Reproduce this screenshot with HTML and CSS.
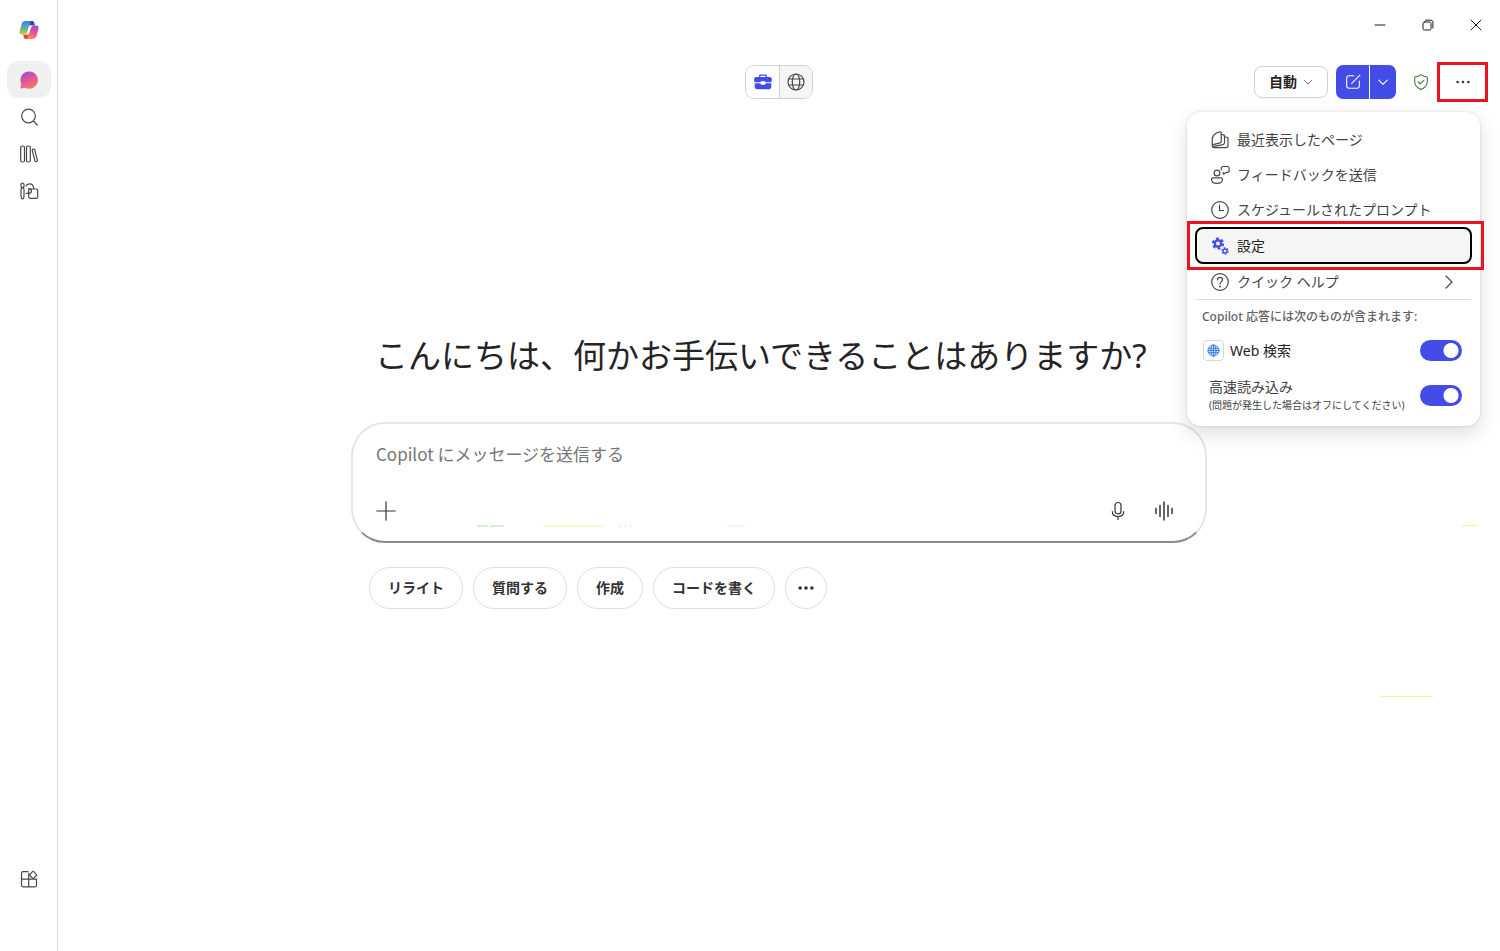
FILE: index.html
```html
<!DOCTYPE html>
<html lang="ja">
<head>
<meta charset="utf-8">
<title>Copilot</title>
<link rel="stylesheet" href="styles.css">
</head>
<body>
<div class="app">
  <nav class="rail" aria-label="ナビゲーション">
    <svg class="logo" viewBox="0 0 20 20" aria-hidden="true">
      <defs>
        <linearGradient id="lgA" x1="0.3" y1="0" x2="0.2" y2="1"><stop offset="0" stop-color="#3f7fe0"/><stop offset=".35" stop-color="#4aa0dc"/><stop offset=".6" stop-color="#6abf6a"/><stop offset="1" stop-color="#e8c23c"/></linearGradient>
        <linearGradient id="lgB" x1="0.8" y1="0" x2="0.3" y2="1"><stop offset="0" stop-color="#a54ee0"/><stop offset=".5" stop-color="#e8508c"/><stop offset="1" stop-color="#f9965a"/></linearGradient>
        <linearGradient id="lgC" x1="0.2" y1="0" x2="0.7" y2="1"><stop offset="0" stop-color="#9b4bd6"/><stop offset=".45" stop-color="#d9569f"/><stop offset="1" stop-color="#ff7a5c"/></linearGradient>
      </defs>
      <path fill="#2448b8" d="M11 1h2.200c1.200 0 1.700.8 2 1.800l.8 2.700h-3.500c-1.400 0-2 .8-2.500 2z"/>
      <path fill="#e8482f" d="M9 19H6.800c-1.200 0-1.700-.8-2-1.800L4 14.500h3.500c1.400 0 2-.8 2.500-2z"/>
      <path fill="url(#lgA)" d="M6.600 1H13c-1.200 0-1.800.9-2.200 2.200L8.400 11.500c-.6 2-1.400 3-3.400 3H2.600C.6 14.500 0 13 .6 11l2-7C3.300 2 4.400 1 6.600 1z"/>
      <path fill="url(#lgB)" d="M13.400 19H7c1.200 0 1.800-.9 2.200-2.200l2.400-8.300c.6-2 1.400-3 3.400-3h2.400c2 0 2.600 1.500 2 3.500l-2 7c-.7 2-1.800 3-4 3z"/>
      <path fill="#fff" d="M10.800 5.500h2.700c-1.200.4-1.700 1.200-2.100 2.600l-1.200 4c-.4 1.400-1 2.200-2.200 2.400H6.200c1.400-.2 2-1.100 2.400-2.500l1.100-3.900c.3-1.100.6-1.900 1.100-2.600z"/>
    </svg>
    <button class="rail-btn active" aria-label="チャット"><svg viewBox="0 0 20 20"><path fill="url(#lgC)" d="M10.200 1.500a8.600 8.600 0 1 1-3.900 16.200L2 18.600c-.4.100-.7-.2-.6-.6l.9-4.100A8.600 8.600 0 0 1 10.200 1.500z"/></svg></button>
    <button class="rail-btn" aria-label="検索"><svg class="ln" viewBox="0 0 20 20"><circle cx="9.500" cy="9" r="6.800"/><path d="M14.400 14l4 4"/></svg></button>
    <button class="rail-btn" aria-label="ライブラリ"><svg class="ln" viewBox="0 0 20 20"><rect x="1.700" y="2" width="3.800" height="16" rx="1.500"/><rect x="7.500" y="2" width="3.800" height="16" rx="1.500"/><path d="M13.300 6.700c-.2-.8.200-1.300.9-1.500.8-.2 1.400.2 1.600.9l2.600 10c.2.800-.2 1.300-.9 1.500-.8.200-1.400-.2-1.600-.9z"/></svg></button>
    <button class="rail-btn" aria-label="作成"><svg class="ln" viewBox="0 0 20 20"><path d="M3.500 2c1.100 0 1.600.9 1.600 2.200 0 1-.5 2-1.100 2.500H3c-.6-.5-1.100-1.500-1.100-2.500C1.900 2.900 2.400 2 3.500 2zM2 8.500c0-1 .5-1.600 1.500-1.600S5 7.500 5 8.500v6c0 1.500-.6 3.300-1.500 3.300S2 16 2 14.500z"/><path d="M7 4.800c.8-1.200 2-1.900 3.500-1.900 2.400 0 4.100 1.700 4.200 4.600M7.200 12.300h2c1.900 0 3.300-1.200 3.300-2.600S11.200 7.500 9.500 7.500"/><rect x="9.700" y="8" width="9" height="9.300" rx="1.600"/></svg></button>
    <button class="rail-btn apps" aria-label="アプリ"><svg class="ln" viewBox="0 0 20 20"><path d="M9 2.700H4C3 2.700 2.500 3.200 2.500 4.200v12.100c0 1 .5 1.500 1.500 1.500h12c1 0 1.500-.5 1.500-1.500v-6.100h-15M9.700 4.500v13.300"/><path d="M13.500 2.700c.4-.4.800-.4 1.200 0l2.600 2.600c.4.400.4.800 0 1.200l-2.600 2.600c-.4.400-.8.400-1.200 0l-2.600-2.600c-.4-.4-.4-.8 0-1.200z"/></svg></button>
  </nav>

  <div class="stage">
    <header>
      <div class="window-bar">
        <button aria-label="最小化"><svg viewBox="0 0 12 12"><path d="M1 6h10"/></svg></button>
        <button aria-label="元に戻す"><svg viewBox="0 0 12 12"><rect x="1" y="3" width="8" height="8" rx="1.500"/><path d="M3.500 1.200H9c1.200 0 1.900.7 1.900 1.900V9"/></svg></button>
        <button aria-label="閉じる"><svg viewBox="0 0 12 12"><path d="M1 1l10 10M11 1L1 11"/></svg></button>
      </div>
      <div class="toolbar">
        <div class="mode">
          <button class="on" aria-label="職場"><svg viewBox="0 0 20 20"><path fill="#444ce7" d="M6 5V4c0-1 .6-1.500 1.500-1.500h5c.9 0 1.500.5 1.500 1.500v1h2.500c1.500 0 2.300.8 2.300 2.200v1.600c0 1-.6 1.500-1.500 1.500h-4.800c0-.8-.5-1.100-1.200-1.100H8.700c-.7 0-1.200.3-1.200 1.100H2.700c-.9 0-1.500-.5-1.500-1.500V7.200C1.200 5.800 2 5 3.500 5zm1.300 0h5.400v-.7c0-.3-.2-.5-.5-.5H7.800c-.3 0-.5.200-.5.500z"/><path fill="#444ce7" d="M1.700 11.300h5.800c0 1 .5 1.400 1.200 1.400h2.600c.7 0 1.200-.4 1.200-1.400h5.800v3.500c0 1.600-.8 2.400-2.300 2.400H4c-1.500 0-2.300-.8-2.300-2.400z"/></svg></button>
          <button aria-label="Web"><svg class="ln" viewBox="0 0 20 20"><circle cx="10" cy="10" r="8"/><ellipse cx="10" cy="10" rx="3.700" ry="8"/><path d="M2.700 7h14.600M2.700 13h14.600"/></svg></button>
        </div>
        <div class="tools">
          <button class="auto">自動<svg viewBox="0 0 10 10"><path d="M1.500 3.500L5 7l3.500-3.500"/></svg></button>
          <div class="split">
            <button class="new" aria-label="新しいチャット"><svg viewBox="0 0 20 20"><path d="M11 3H5.500C4 3 3 4 3 5.500v9C3 16 4 17 5.500 17h9c1.500 0 2.500-1 2.500-2.500V9M8.500 11.500L17.700 2.300"/></svg></button>
            <button class="drop" aria-label="その他の新規"><svg viewBox="0 0 10 10"><path d="M1.500 3.500L5 7l3.500-3.500"/></svg></button>
          </div>
          <button class="shield" aria-label="保護"><svg viewBox="0 0 20 20"><path d="M10 1.800c2 1.600 4.300 2.500 7 2.700V9.500c0 4-2.300 6.900-7 8.800-4.700-1.900-7-4.800-7-8.800V4.500c2.700-.2 5-1.100 7-2.700z"/><path d="M6.800 10l2.300 2.200 4.300-4.400"/></svg></button>
          <button class="more" aria-label="その他"><svg viewBox="0 0 20 20"><circle cx="4" cy="10" r="1.400"/><circle cx="10" cy="10" r="1.400"/><circle cx="16" cy="10" r="1.400"/></svg></button>
        </div>
        <div class="menu">
          <button class="item"><svg class="ln" viewBox="0 0 20 20"><path d="M2.300 16V9.500c0-4 2.700-6.600 7.500-7.700.9-.2 1.400.2 1.400 1v8.700c0 .7-.4 1.100-1.100 1.300l-6 1.500c-1.200.3-1.800.9-1.800 1.700 0 1 .8 1.700 1.900 1.700h11.600c1.400 0 2.200-.8 2.200-2.200V7.800M11.300 4.700h1.200c1.200 0 2 .7 2 1.800v6.300c0 1-.5 1.600-1.400 1.800L4 16.300M14.600 7h1.400c1.200 0 2 .7 2 1.800"/></svg>最近表示したページ</button>
          <button class="item"><svg class="ln" viewBox="0 0 20 20"><circle cx="7" cy="8" r="2.900"/><path d="M3 12.800h8c1 0 1.500.5 1.500 1.400 0 2.400-2 4.100-5.500 4.100s-5.500-1.700-5.500-4.100c0-.9.500-1.400 1.500-1.400z"/><path d="M11.300 5V3.200c0-1 .7-1.700 1.700-1.700h4.500c1 0 1.700.7 1.700 1.700v2.500c0 1-.7 1.700-1.700 1.700H16l-2 1.500c-.4.300-.8.100-.8-.4V7.400"/></svg>フィードバックを送信</button>
          <button class="item"><svg class="ln" viewBox="0 0 20 20"><circle cx="10" cy="10" r="8.300"/><path d="M9.500 5v5.500h4"/></svg>スケジュールされたプロンプト</button>
          <button class="item current"><svg viewBox="0 0 20 20"><g fill="none" stroke="#444ce7" stroke-linecap="butt"><circle cx="8" cy="7.500" r="3.200" stroke-width="2.400"/><circle cx="8" cy="7.500" r="5" stroke-width="2.200" stroke-dasharray="2.800 2.436"/><circle cx="15" cy="15" r="2" stroke-width="1.300"/><circle cx="15" cy="15" r="3" stroke-width="1.400" stroke-dasharray="1.600 1.542"/></g></svg>設定</button>
          <button class="item"><svg class="ln" viewBox="0 0 20 20"><circle cx="10" cy="10" r="8.300"/><path d="M7.500 8c0-1.600 1-2.600 2.500-2.600s2.500 1 2.500 2.400c0 2-2.500 2.100-2.500 4.200"/><circle cx="10" cy="14.400" r=".4"/></svg>クイック ヘルプ<svg class="ln next" viewBox="0 0 16 16"><path d="M5 2l6 6-6 6"/></svg></button>
          <hr>
          <p class="caption">Copilot 応答には次のものが含まれます:</p>
          <label class="option web"><span class="badge"><svg viewBox="0 0 20 20"><circle cx="10" cy="10" r="8.500"/><ellipse cx="10" cy="10" rx="3.900" ry="8.500"/><path d="M2.400 6.700h15.200M2.400 13.300h15.200M1.500 10h17M10 1.500v17"/></svg></span><span>Web 検索</span><input class="switch" type="checkbox" role="switch" checked></label>
          <label class="option fast"><span>高速読み込み<small>(問題が発生した場合はオフにしてください)</small></span><input class="switch" type="checkbox" role="switch" checked></label>
        </div>
      </div>
    </header>

    <main>
      <h1>こんにちは、何かお手伝いできることはありますか?</h1>
      <form class="composer">
        <input class="message" type="text" aria-label="メッセージ" placeholder="Copilot にメッセージを送信する">
        <div class="actions">
          <button type="button" aria-label="追加"><svg viewBox="0 0 20 20"><path d="M10 .8v18.400M.8 10h18.400"/></svg></button>
          <button type="button" class="mic" aria-label="音声入力"><svg viewBox="0 0 20 20"><rect x="7" y="1.500" width="6" height="11.500" rx="3"/><path d="M4.300 10.500c0 3.100 2.400 5 5.700 5s5.700-1.900 5.700-5M10 15.500v3"/></svg></button>
          <button type="button" aria-label="音声会話"><svg class="wave" viewBox="0 0 20 20"><path d="M2 7.500v5M6 4.500v11M10 1v18M14 4.500v11M18 7.500v5"/></svg></button>
        </div>
        <svg class="flecks" viewBox="0 0 280 2" aria-hidden="true"><path stroke="#9fe29a" d="M0 1h11M13 1h14" /><path stroke="#eef58c" d="M66 1h60"/><path stroke="#a8dca4" stroke-dasharray="1 4" d="M143 1h15"/><path stroke="#e6efe6" d="M250 1h18"/></svg>
      </form>
      <div class="chips">
        <button>リライト</button>
        <button>質問する</button>
        <button>作成</button>
        <button>コードを書く</button>
        <button class="round" aria-label="その他の候補"><svg viewBox="0 0 20 20"><circle cx="3.500" cy="10" r="2"/><circle cx="10" cy="10" r="2"/><circle cx="16.500" cy="10" r="2"/></svg></button>
      </div>
    </main>
    <div class="streak upper" aria-hidden="true"></div>
    <div class="streak lower" aria-hidden="true"></div>
  </div>
</div>
</body>
</html>
```

FILE: styles.css
```css
* { box-sizing: border-box; }

body {
  margin: 0;
  background: #fff;
  color: #424242;
  font: 14px/20px "Noto Sans", "Noto Sans CJK JP", sans-serif;
}

button {
  display: flex;
  align-items: center;
  justify-content: center;
  padding: 0;
  border: 0;
  background: none;
  color: inherit;
  font: inherit;
}

svg {
  display: block;
  flex: none;
  width: 20px;
  height: 20px;
  fill: none;
  stroke-linecap: round;
  stroke-linejoin: round;
}

.ln { stroke: #484848; stroke-width: 1.2; }

.app { display: flex; min-height: 100vh; }

/* Left rail */
.rail {
  display: flex;
  flex-direction: column;
  align-items: center;
  width: 58px;
  padding: 20px 0 54px;
  border-right: 1px solid #dcdcdc;
}
.logo { margin-bottom: 21px; }
.rail-btn { width: 44px; height: 37px; border-radius: 12px; }
.rail-btn.active { background: #f0f0f0; }
.rail .rail-btn.apps { margin-top: auto; }

.stage { position: relative; flex: 1; min-width: 0; }

/* Window and tool bars */
.window-bar { display: flex; justify-content: flex-end; height: 50px; }
.window-bar button { width: 48px; }
.window-bar svg { width: 12px; height: 12px; stroke: #1b1b1b; }

.toolbar {
  position: relative;
  display: grid;
  grid-template-columns: 1fr auto 1fr;
  align-items: center;
  height: 64px;
  padding: 0 12px;
}
.mode {
  grid-column: 2;
  display: flex;
  overflow: hidden;
  border: 1px solid #d1d1d1;
  border-radius: 9px;
}
.mode button { width: 32px; height: 32px; background: #f5f5f5; }
.mode .on { width: 34px; border-right: 1px solid #d1d1d1; background: #fff; }

.tools { display: flex; align-items: center; justify-content: flex-end; }
.auto {
  gap: 6px;
  width: 74px;
  height: 32px;
  margin-right: 8px;
  border: 1px solid #d1d1d1;
  border-radius: 8px;
  color: #242424;
  font-weight: 600;
}
.auto svg { width: 10px; height: 10px; stroke: #616161; }
.split {
  display: flex;
  gap: 1px;
  overflow: hidden;
  margin-right: 16px;
  border-radius: 7px;
}
.split button { height: 34px; background: #444ce7; }
.split svg { stroke: #fff; }
.new { width: 33px; }
.new svg { width: 18px; height: 18px; stroke-width: 1.2; }
.drop { width: 26px; }
.drop svg { width: 12px; height: 12px; }
.shield svg { width: 18px; height: 18px; stroke: #3b7a3b; stroke-width: 1.2; }
.more { width: 51px; height: 40px; margin-left: 7px; border: 3px solid #ec1320; }
.more svg { width: 18px; height: 18px; fill: #333; }

/* Overflow menu */
.menu {
  position: absolute;
  z-index: 2;
  top: 62px;
  right: 20px;
  width: 293px;
  padding: 10px 8px 13px;
  border-radius: 14px;
  background: #fff;
  box-shadow: 0 8px 20px #0002, 0 0 3px #0002;
}
.item {
  justify-content: flex-start;
  gap: 7px;
  width: 100%;
  height: 35px;
  padding: 0 15px;
}
.item .next { width: 16px; height: 16px; margin-left: auto; }
.item.current {
  position: relative;
  height: 37px;
  border: 2px solid #000;
  border-radius: 8px;
  padding: 0 13px;
  background: #f5f5f5;
  color: #242424;
}
/* Callout frame round the highlighted entry */
.item.current::after {
  content: "";
  position: absolute;
  inset: -8px -14px -8px -10px;
  border: 3px solid #ec1320;
}
.menu hr { margin: 0 1px 7px; border: 0; border-top: 1px solid #dcdcdc; }
.caption { margin: 0 7px; color: #616161; font-size: 12px; font-weight: 500; }
.option { display: flex; align-items: center; padding: 0 10px 0 8px; }
.web { gap: 6px; margin-top: 13px; color: #242424; }
.badge {
  display: grid;
  place-items: center;
  width: 21px;
  height: 21px;
  border: 1px solid #d8d8d8;
  border-radius: 4px;
}
.badge svg { width: 13px; height: 13px; stroke: #3f82e8; stroke-width: 1.5; fill: #d5e7ff; }
.fast { margin-top: 16px; padding-left: 14px; }
.fast small { display: block; font-size: 10px; line-height: 16px; white-space: nowrap; }
.switch {
  appearance: none;
  flex: none;
  width: 42px;
  height: 21px;
  margin: 0 0 0 auto;
  border-radius: 11px;
  background: radial-gradient(circle at 31px 50%, #fff 7px, #444ce7 8px);
}

/* Conversation start */
main { width: 856px; max-width: 100%; margin: 217px auto 0; }
h1 {
  margin: 0 0 41px;
  padding-left: 24px;
  color: #242424;
  font-size: 33px;
  font-weight: 400;
  line-height: 50px;
  white-space: nowrap;
}
.composer {
  position: relative;
  display: flex;
  flex-direction: column;
  justify-content: space-between;
  height: 121px;
  padding: 17px 31px 20px 23px;
  border: 2px solid #e6e6e6;
  border-bottom-color: #8c8c8c;
  border-radius: 34px;
}
.message {
  width: 100%;
  height: 26px;
  padding: 0;
  border: 0;
  outline: 0;
  background: none;
  font: 17px/26px "Noto Sans CJK JP", sans-serif;
}
.message::placeholder { color: #757575; opacity: 1; }
.actions { display: flex; gap: 26px; }
.actions svg { stroke: #333; stroke-width: 1.2; }
.actions .wave { stroke-width: 1.5; }
.mic { margin-left: auto; }
.flecks {
  position: absolute;
  bottom: 14px;
  left: 124px;
  width: 280px;
  height: 2px;
  stroke-linecap: butt;
}

.chips { display: flex; gap: 10px; padding: 24px 18px 0; }
.chips button {
  height: 42px;
  padding: 0 18px;
  border: 1px solid #e0e0e0;
  border-radius: 21px;
  color: #333;
  font-weight: 600;
}
.chips .round { width: 42px; padding: 0; }
.round svg { width: 18px; height: 18px; fill: #333; }

/* Faint marks on the canvas */
.streak { position: absolute; height: 1px; background: #eef58c; }
.upper { top: 525px; right: 22px; width: 16px; }
.lower { top: 696px; right: 67px; width: 52px; }
```
